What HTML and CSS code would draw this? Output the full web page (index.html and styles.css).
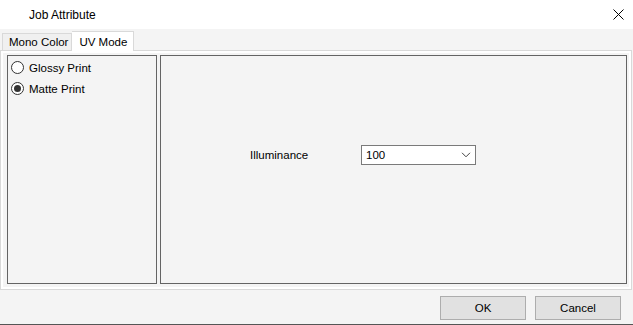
FILE: index.html
```html
<!DOCTYPE html>
<html>
<head>
<meta charset="utf-8">
<link rel="stylesheet" href="styles.css">
</head>
<body>
<div class="window">
  <div class="titlebar">
    <span class="title">Job Attribute</span>
    <svg class="close" width="11" height="11" viewBox="0 0 11 11"><path d="M0.5 0.5 L10.5 10.5 M10.5 0.5 L0.5 10.5" stroke="#000" stroke-width="1" fill="none"/></svg>
  </div>
  <div class="tabs">
    <div class="tab">Mono Color</div>
    <div class="tab active">UV Mode</div>
  </div>
  <div class="tabpanel">
    <div class="listpanel">
      <label class="radio"><span class="circle"></span>Glossy Print</label>
      <label class="radio"><span class="circle checked"></span>Matte Print</label>
    </div>
    <div class="settings">
      <div class="field">
        <span class="label">Illuminance</span>
        <div class="combo">
          <span>100</span>
          <svg class="chev" width="10" height="6" viewBox="0 0 10 6"><path d="M1 0.8 L5 4.8 L9 0.8" stroke="#444" stroke-width="1" fill="none"/></svg>
        </div>
      </div>
    </div>
  </div>
  <div class="footer">
    <button class="btn">OK</button>
    <button class="btn">Cancel</button>
  </div>
</div>
</body>
</html>
```
FILE: styles.css
```css
html, body {
  margin: 0;
  padding: 0;
}
body {
  width: 633px;
  height: 325px;
  overflow: hidden;
  font-family: "Liberation Sans", Arial, sans-serif;
  font-size: 11.5px;
  color: #000;
  background: #f4f4f4;
}
.window {
  width: 633px;
  height: 325px;
  box-sizing: border-box;
  border-bottom: 1px solid #555;
  display: flex;
  flex-direction: column;
}
.titlebar {
  height: 29px;
  background: #fff;
  display: flex;
  align-items: center;
  justify-content: space-between;
  padding: 0 9px 0 29px;
  box-sizing: border-box;
  font-size: 12px;
}
.close {
  display: block;
}
.tabs {
  height: 21px;
  display: flex;
  align-items: flex-end;
  padding-left: 2px;
  box-sizing: border-box;
}
.tab {
  height: 17px;
  box-sizing: border-box;
  border: 1px solid #d9d9d9;
  border-bottom: none;
  background: #f0f0f0;
  padding: 0 3px 0 6px;
  display: flex;
  align-items: center;
}
.tab.active {
  height: 20px;
  background: #fff;
  border-left: none;
  padding: 0 6px 0 7px;
  margin-bottom: -1px;
  position: relative;
  z-index: 1;
}
.tabpanel {
  height: 240px;
  box-sizing: border-box;
  border: 1px solid #d9d9d9;
  box-shadow: inset 0 0 0 2px #fff;
  padding: 4px 4px 5px 6px;
  margin-right: 1px;
  display: flex;
  gap: 3px;
}
.listpanel {
  width: 150px;
  box-sizing: border-box;
  border: 1px solid #646464;
  padding: 1px 0 0 3px;
  display: flex;
  flex-direction: column;
}
.radio {
  height: 21px;
  display: flex;
  align-items: center;
  gap: 5px;
}
.circle {
  width: 13px;
  height: 13px;
  box-sizing: border-box;
  border: 1px solid #333;
  border-radius: 50%;
  background: #fff;
  display: flex;
  align-items: center;
  justify-content: center;
}
.circle.checked::after {
  content: "";
  width: 7px;
  height: 7px;
  border-radius: 50%;
  background: #333;
}
.settings {
  flex: 1;
  box-sizing: border-box;
  border: 1px solid #646464;
  padding: 89px 0 0 89px;
}
.field {
  display: flex;
  align-items: center;
}
.label {
  width: 111px;
}
.combo {
  width: 115px;
  height: 20px;
  box-sizing: border-box;
  border: 1px solid #7a7a7a;
  background: #fff;
  display: flex;
  align-items: center;
  justify-content: space-between;
  padding: 0 4px 0 4px;
}
.chev {
  display: block;
}
.footer {
  flex: 1;
  display: flex;
  justify-content: flex-end;
  align-items: flex-start;
  gap: 9px;
  padding: 6px 12px 0 0;
}
.btn {
  width: 86px;
  height: 24px;
  box-sizing: border-box;
  border: 1px solid #adadad;
  background: #e1e1e1;
  font-family: inherit;
  font-size: 11.5px;
  color: #000;
  padding: 0;
}
```
